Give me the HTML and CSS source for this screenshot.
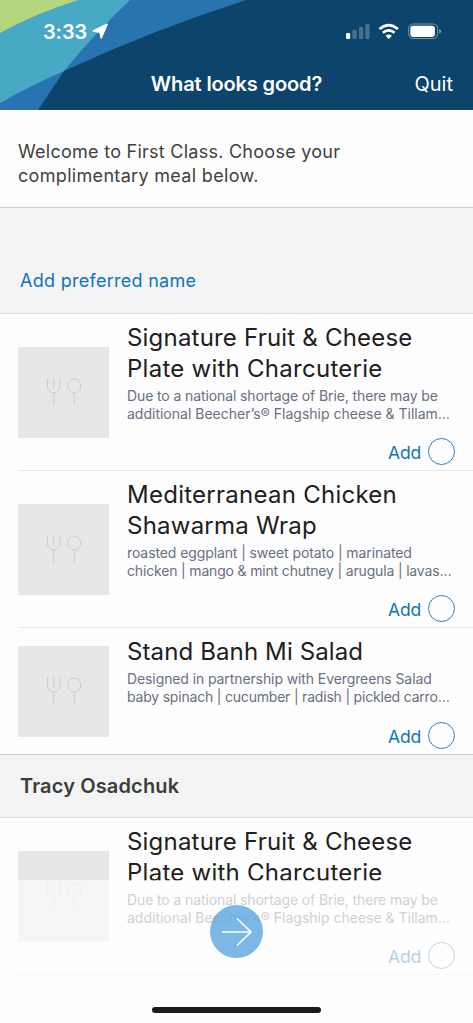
FILE: index.html
```html
<!DOCTYPE html>
<html lang="en">
<head>
<meta charset="utf-8">
<title>What looks good?</title>
<link rel="stylesheet" href="styles.css">
</head>
<body>
<svg class="defs" width="0" height="0">
  <symbol id="cutlery" viewBox="0 0 36 28">
    <path d="M1.5 0.5V8.5a6.2 6.2 0 0 0 12.5 0V0.5M7.8 0.5V11M7.8 15V27.5M28.3 15V27.5"/>
    <ellipse cx="28.3" cy="8" rx="6.5" ry="7"/>
  </symbol>
</svg>
<div class="screen">
  <header class="header">
    <svg class="swoosh" viewBox="0 0 473 110" width="473" height="110">
      <path fill="#2874b0" d="M0 0H246Q155 29 64 71L38 110H0Z"/>
      <path fill="#48a9c5" d="M0 0H130Q97 31 64 71Q34 84 0 103Z"/>
      <path fill="#b4d77e" d="M0 0H78Q34 14 0 33Z"/>
    </svg>
    <div class="status">
      <div class="time"><span>3:33</span>
        <svg width="17" height="17" viewBox="0 0 17 17"><path d="M15.2 1.2 9.2 15.1 7.9 9.3 1.2 8Z" fill="#fff" stroke="#fff" stroke-width="1.4" stroke-linejoin="round"/></svg>
      </div>
      <svg width="96" height="18" viewBox="0 0 96 18">
        <g fill="#fff">
          <rect x="0" y="10" width="4.2" height="6" rx="1.2"/>
          <g opacity=".24"><rect x="6.5" y="7" width="4.2" height="9" rx="1.2"/><rect x="13" y="4" width="4.2" height="12" rx="1.2"/><rect x="19.4" y="1" width="4.2" height="15" rx="1.2"/></g>
          <path d="M42.7 16 39.5 12.8Q42.7 10.4 45.9 12.8Z"/>
        </g>
        <path d="M33.5 6Q42.7 -1.8 51.9 6M36.8 9.8Q42.7 4.8 48.6 9.8" fill="none" stroke="#fff" stroke-width="2.7"/>
        <rect x="62.7" y="1" width="29" height="14.5" rx="4.4" fill="none" stroke="#fff" stroke-opacity=".43"/>
        <rect x="64.3" y="2.7" width="24.6" height="11.2" rx="2.8" fill="#fff"/>
        <path d="M93.3 6v4.6q1.7-.7 1.7-2.3t-1.7-2.3" fill="#fff" opacity=".5"/>
      </svg>
    </div>
    <div class="nav"><span></span><h1>What looks good?</h1><a class="quit">Quit</a></div>
  </header>

  <section class="intro"><span class="i1">Welcome to First Class. Choose your</span><span class="i2">complimentary meal below.</span></section>
  <section class="guest"><a class="prefer">Add preferred name</a></section>

  <main>
    <article class="meal">
      <div class="thumb"><svg width="36" height="28"><use href="#cutlery"/></svg></div>
      <div class="body">
        <h2><span class="t1">Signature Fruit &amp; Cheese</span><span class="t2">Plate with Charcuterie</span></h2>
        <p><span class="d1">Due to a national shortage of Brie, there may be</span><span class="d2">additional Beecher’s® Flagship cheese &amp; Tillam…</span></p>
        <div class="add"><span>Add</span><i class="ring"></i></div>
      </div>
    </article>
    <article class="meal">
      <div class="thumb"><svg width="36" height="28"><use href="#cutlery"/></svg></div>
      <div class="body">
        <h2><span class="t3">Mediterranean Chicken</span><span class="t4">Shawarma Wrap</span></h2>
        <p><span class="d3">roasted eggplant | sweet potato | marinated</span><span class="d4">chicken | mango &amp; mint chutney | arugula | lavas…</span></p>
        <div class="add"><span>Add</span><i class="ring"></i></div>
      </div>
    </article>
    <article class="meal last">
      <div class="thumb"><svg width="36" height="28"><use href="#cutlery"/></svg></div>
      <div class="body">
        <h2><span class="t5">Stand Banh Mi Salad</span></h2>
        <p><span class="d5">Designed in partnership with Evergreens Salad</span><span class="d6">baby spinach | cucumber | radish | pickled carro…</span></p>
        <div class="add"><span>Add</span><i class="ring"></i></div>
      </div>
    </article>
    <h3 class="person"><span>Tracy Osadchuk</span></h3>
    <article class="meal">
      <div class="thumb"><svg width="36" height="28"><use href="#cutlery"/></svg></div>
      <div class="body">
        <h2><span class="t1">Signature Fruit &amp; Cheese</span><span class="t2">Plate with Charcuterie</span></h2>
        <p><span class="d1">Due to a national shortage of Brie, there may be</span><span class="d2">additional Beecher’s® Flagship cheese &amp; Tillam…</span></p>
        <div class="add"><span>Add</span><i class="ring"></i></div>
      </div>
    </article>
  </main>

  <footer class="dock">
    <div class="next"><svg width="32" height="30" viewBox="0 0 32 30"><path d="M1 15H30M16 1.5 30 15 16 28.5" fill="none" stroke="#fff" stroke-width="1.6"/></svg></div>
    <div class="home"></div>
  </footer>
</div>
</body>
</html>
```
FILE: styles.css
```css
* { box-sizing: border-box; }
body { margin: 0; font-family: Inter, "Liberation Sans", sans-serif; background: #fdfdfd; }
h1, h2, h3, p { margin: 0; font-weight: 400; }
.defs { position: absolute; }
.screen { position: relative; width: 473px; height: 1023px; overflow: hidden; background: #fdfdfd; }

.header { position: relative; height: 110px; background: #0d446b; color: #fff; }
.swoosh { position: absolute; left: 0; top: 0; }
.status { position: relative; display: flex; justify-content: space-between; align-items: center; height: 63px; padding: 0 31px 0 43px; }
.time { display: flex; align-items: center; gap: 5px; font-size: 20px; font-weight: 600; letter-spacing: -.1px; }
.nav { position: relative; display: grid; grid-template-columns: 1fr auto 1fr; align-items: center; height: 42px; padding: 0 20px; }
.nav h1 { font-size: 20px; font-weight: 600; letter-spacing: -.13px; }
.quit { justify-self: end; font-size: 20px; }

.intro { height: 98px; padding: 30px 18px 0; border-bottom: 1px solid #cfcfcf; color: #414141; font-size: 18px; line-height: 24px; }
.intro span, .meal h2 span, .meal p span { display: block; width: max-content; white-space: nowrap; }
.guest { display: flex; align-items: flex-end; height: 106px; padding: 0 20px 20px; background: #f4f4f4; border-bottom: 1px solid #dcdcdc; }
.prefer { color: #1274b8; font-size: 18px; line-height: 24px; letter-spacing: .28px; }

.meal { display: flex; align-items: center; gap: 18px; margin-left: 18px; border-bottom: 1px solid #e7e7e7; }
.meal.last { margin-left: 0; padding-left: 18px; border-color: #cfcfcf; }
.meal.last .add { margin-top: 16px; }
.thumb { display: flex; flex: none; align-items: center; justify-content: center; width: 91px; height: 91px; background: #e7e7e7; }
.thumb svg { fill: none; stroke: #cdcdcd; stroke-width: 1; }
.body { flex: 1; min-width: 0; padding: 8px 18px 5px 0; }
.meal h2 { color: #202020; font-size: 24px; line-height: 31px; }
.meal p { margin-top: 3px; color: #697080; font-size: 14px; line-height: 18px; }
.add { display: flex; align-items: center; justify-content: flex-end; gap: 7px; height: 27px; margin-top: 15px; color: #1274b8; font-size: 17.5px; }
.add span { padding-top: 2px; letter-spacing: -.2px; }
.ring { width: 27px; height: 27px; border: 1px solid #2580c0; border-radius: 50%; }
.person { display: flex; align-items: center; height: 63px; padding-left: 20px; background: #f4f4f4; border-bottom: 1px solid #dcdcdc; color: #3c3c3c; font-size: 20px; font-weight: 600; letter-spacing: .14px; }

/* Per-line tracking */
.i1 { letter-spacing: .26px; }
.i2 { letter-spacing: .32px; }
.t1 { letter-spacing: .2px; }
.t2, .t3 { letter-spacing: .26px; }
.t4 { letter-spacing: .23px; }
.t5 { letter-spacing: .12px; }
.d1 { letter-spacing: -.11px; }
.d3, .d5 { letter-spacing: -.1px; }
.d4 { letter-spacing: -.17px; }
.d6 { letter-spacing: -.2px; }

.dock { position: absolute; left: 0; right: 0; top: 880px; height: 143px; display: flex; flex-direction: column; align-items: center; padding-top: 25px; background: rgba(253, 253, 253, .68); }
.next { display: flex; align-items: center; justify-content: center; width: 53px; height: 53px; border-radius: 50%; background: rgba(98, 170, 224, .84); }
.home { width: 169px; height: 6px; margin-top: 49px; border-radius: 3px; background: #1b1b1b; }
```
